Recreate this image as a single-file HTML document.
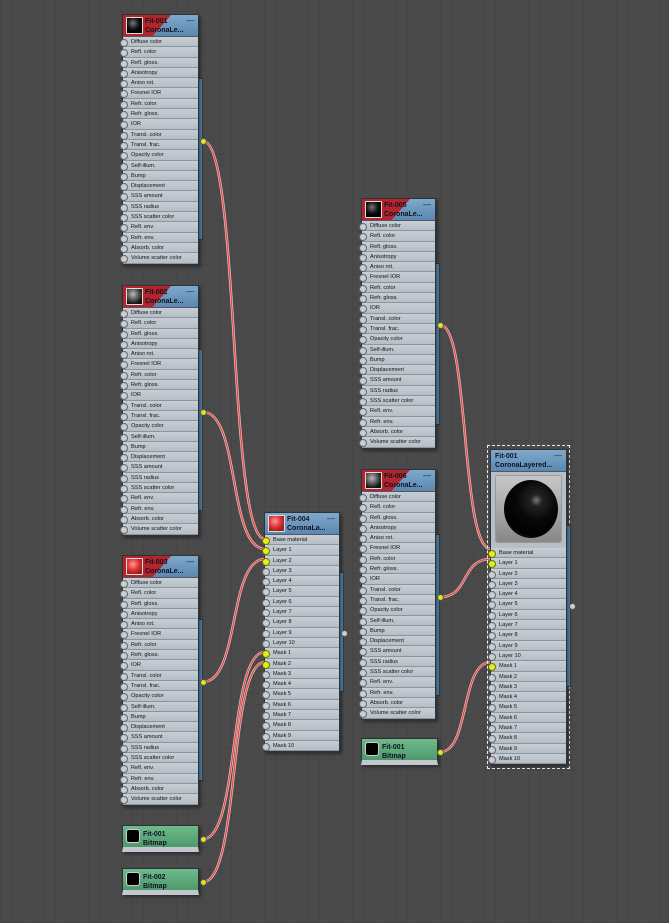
<!DOCTYPE html>
<html><head><meta charset="utf-8"><style>
*{margin:0;padding:0;box-sizing:border-box}
body{width:669px;height:923px;overflow:hidden;background:#4a4a4a;position:relative;font-family:"Liberation Sans",sans-serif;
background-image:linear-gradient(rgba(0,0,0,.06) 1px,transparent 1px),linear-gradient(90deg,rgba(0,0,0,.06) 1px,transparent 1px);background-size:11px 11px}
.node{position:absolute;background:#aeb7bf;border:1px solid #2e3338;box-shadow:2px 2px 3px rgba(0,0,0,.4)}
.hd{height:22px;background:linear-gradient(#7fa9cc,#5b88b0);position:relative;overflow:hidden;border-bottom:1px solid #556}
.hd.m::before{content:"";position:absolute;left:0;top:0;width:48px;height:22px;background:#b3242b;clip-path:polygon(0 0,100% 0,60% 100%,0 100%)}
.ic{position:absolute;left:3px;top:2px;width:17px;height:17px;border:1px solid #ddd;background:radial-gradient(circle at 40% 35%,#777,#111 45%,#000 70%);border-radius:1px}
.ic.red{background:radial-gradient(circle at 40% 35%,#f99,#d33 45%,#922 75%)}
.t{position:absolute;left:22px;top:2px;font-size:7px;font-weight:bold;color:#112;line-height:9px;white-space:nowrap}
.mn{position:absolute;right:4px;top:1px;font-size:8px;color:#223}
.rw{height:10.3px;font-size:5.6px;line-height:10px;padding-left:8px;color:#111;background:linear-gradient(#c7ced5,#b6bec6);border-bottom:1px solid #8c959d;position:relative;white-space:nowrap}
.rw::before{content:"";position:absolute;left:-3px;top:2px;width:6px;height:6px;border-radius:50%;background:#c8ced4;border:1px solid #666}
.rw.y::before{background:#dff01a;border-color:#6a7010}
.bar{position:absolute;width:5px;background:#5a8ab3;border:1px solid #2e3b48}
.out{position:absolute;width:7px;height:7px;border-radius:50%;background:#dde61c;border:1px solid #555}
.out.g{background:#c9cfd5}
.bm{position:absolute;width:77px;height:27px;background:linear-gradient(#6fba8d,#4c9a6c);border:1px solid #2e3338;border-bottom:5px solid #c2c8cd;box-shadow:2px 2px 3px rgba(0,0,0,.4)}
.bm .ic{background:#000;top:3px;width:14px;height:14px;border:1px solid #ccc;border-radius:3px}
.bm .t{left:20px;top:4px}
</style></head><body>
<svg width="669" height="923" style="position:absolute;left:0;top:0" fill="none">
<g stroke="#f3c0c0" stroke-width="2.6">
<path d="M203 141C240 141 228 539 265 539"/><path d="M203 412C240 412 228 549 265 549"/><path d="M203 682C240 682 228 559 265 559"/>
<path d="M203 839C240 839 228 652 265 652"/><path d="M203 882C240 882 228 662 265 662"/>
<path d="M440 325C470 325 460 549 491 549"/><path d="M440 597C470 597 460 559 491 559"/><path d="M440 752C470 752 460 662 491 662"/></g>
<g stroke="#d94a4a" stroke-width="1.2">
<path d="M203 141C240 141 228 539 265 539"/><path d="M203 412C240 412 228 549 265 549"/><path d="M203 682C240 682 228 559 265 559"/>
<path d="M203 839C240 839 228 652 265 652"/><path d="M203 882C240 882 228 662 265 662"/>
<path d="M440 325C470 325 460 549 491 549"/><path d="M440 597C470 597 460 559 491 559"/><path d="M440 752C470 752 460 662 491 662"/></g>
</svg>

<div class="bar" style="left:198px;top:78px;height:162px"></div>
<div class="node" style="left:122px;top:14px;width:77px">
<div class="hd m"><div class="ic"></div><div class="t">Fit-001<br>CoronaLe...</div><div class="mn">—</div></div>
<div class="rw">Diffuse color</div><div class="rw">Refl. color</div><div class="rw">Refl. gloss.</div><div class="rw">Anisotropy</div><div class="rw">Aniso rot.</div><div class="rw">Fresnel IOR</div><div class="rw">Refr. color</div><div class="rw">Refr. gloss.</div><div class="rw">IOR</div><div class="rw">Transl. color</div><div class="rw">Transl. frac.</div><div class="rw">Opacity color</div><div class="rw">Self-illum.</div><div class="rw">Bump</div><div class="rw">Displacement</div><div class="rw">SSS amount</div><div class="rw">SSS radius</div><div class="rw">SSS scatter color</div><div class="rw">Refl. env.</div><div class="rw">Refr. env.</div><div class="rw">Absorb. color</div><div class="rw">Volume scatter color</div>
</div>

<div class="bar" style="left:198px;top:349px;height:162px"></div>
<div class="node" style="left:122px;top:285px;width:77px">
<div class="hd m"><div class="ic" style="background:radial-gradient(circle at 40% 35%,#bbb,#444 50%,#111 75%)"></div><div class="t">Fit-002<br>CoronaLe...</div><div class="mn">—</div></div>
<div class="rw">Diffuse color</div><div class="rw">Refl. color</div><div class="rw">Refl. gloss.</div><div class="rw">Anisotropy</div><div class="rw">Aniso rot.</div><div class="rw">Fresnel IOR</div><div class="rw">Refr. color</div><div class="rw">Refr. gloss.</div><div class="rw">IOR</div><div class="rw">Transl. color</div><div class="rw">Transl. frac.</div><div class="rw">Opacity color</div><div class="rw">Self-illum.</div><div class="rw">Bump</div><div class="rw">Displacement</div><div class="rw">SSS amount</div><div class="rw">SSS radius</div><div class="rw">SSS scatter color</div><div class="rw">Refl. env.</div><div class="rw">Refr. env.</div><div class="rw">Absorb. color</div><div class="rw">Volume scatter color</div>
</div>

<div class="bar" style="left:198px;top:619px;height:162px"></div>
<div class="node" style="left:122px;top:555px;width:77px">
<div class="hd m"><div class="ic red"></div><div class="t">Fit-003<br>CoronaLe...</div><div class="mn">—</div></div>
<div class="rw">Diffuse color</div><div class="rw">Refl. color</div><div class="rw">Refl. gloss.</div><div class="rw">Anisotropy</div><div class="rw">Aniso rot.</div><div class="rw">Fresnel IOR</div><div class="rw">Refr. color</div><div class="rw">Refr. gloss.</div><div class="rw">IOR</div><div class="rw">Transl. color</div><div class="rw">Transl. frac.</div><div class="rw">Opacity color</div><div class="rw">Self-illum.</div><div class="rw">Bump</div><div class="rw">Displacement</div><div class="rw">SSS amount</div><div class="rw">SSS radius</div><div class="rw">SSS scatter color</div><div class="rw">Refl. env.</div><div class="rw">Refr. env.</div><div class="rw">Absorb. color</div><div class="rw">Volume scatter color</div>
</div>

<div class="bar" style="left:435px;top:263px;height:162px"></div>
<div class="node" style="left:361px;top:198px;width:75px">
<div class="hd m"><div class="ic"></div><div class="t">Fit-005<br>CoronaLe...</div><div class="mn">—</div></div>
<div class="rw">Diffuse color</div><div class="rw">Refl. color</div><div class="rw">Refl. gloss.</div><div class="rw">Anisotropy</div><div class="rw">Aniso rot.</div><div class="rw">Fresnel IOR</div><div class="rw">Refr. color</div><div class="rw">Refr. gloss.</div><div class="rw">IOR</div><div class="rw">Transl. color</div><div class="rw">Transl. frac.</div><div class="rw">Opacity color</div><div class="rw">Self-illum.</div><div class="rw">Bump</div><div class="rw">Displacement</div><div class="rw">SSS amount</div><div class="rw">SSS radius</div><div class="rw">SSS scatter color</div><div class="rw">Refl. env.</div><div class="rw">Refr. env.</div><div class="rw">Absorb. color</div><div class="rw">Volume scatter color</div>
</div>

<div class="bar" style="left:435px;top:534px;height:162px"></div>
<div class="node" style="left:361px;top:469px;width:75px">
<div class="hd m"><div class="ic" style="background:radial-gradient(circle at 40% 35%,#bbb,#444 50%,#111 75%)"></div><div class="t">Fit-006<br>CoronaLe...</div><div class="mn">—</div></div>
<div class="rw">Diffuse color</div><div class="rw">Refl. color</div><div class="rw">Refl. gloss.</div><div class="rw">Anisotropy</div><div class="rw">Aniso rot.</div><div class="rw">Fresnel IOR</div><div class="rw">Refr. color</div><div class="rw">Refr. gloss.</div><div class="rw">IOR</div><div class="rw">Transl. color</div><div class="rw">Transl. frac.</div><div class="rw">Opacity color</div><div class="rw">Self-illum.</div><div class="rw">Bump</div><div class="rw">Displacement</div><div class="rw">SSS amount</div><div class="rw">SSS radius</div><div class="rw">SSS scatter color</div><div class="rw">Refl. env.</div><div class="rw">Refr. env.</div><div class="rw">Absorb. color</div><div class="rw">Volume scatter color</div>
</div>

<div class="bar" style="left:339px;top:572px;height:120px"></div>
<div class="node" style="left:264px;top:512px;width:76px">
<div class="hd"><div class="ic red"></div><div class="t">Fit-004<br>CoronaLa...</div><div class="mn">—</div></div>
<div class="rw y">Base material</div><div class="rw y">Layer 1</div><div class="rw y">Layer 2</div><div class="rw">Layer 3</div><div class="rw">Layer 4</div><div class="rw">Layer 5</div><div class="rw">Layer 6</div><div class="rw">Layer 7</div><div class="rw">Layer 8</div><div class="rw">Layer 9</div><div class="rw">Layer 10</div><div class="rw y">Mask 1</div><div class="rw y">Mask 2</div><div class="rw">Mask 3</div><div class="rw">Mask 4</div><div class="rw">Mask 5</div><div class="rw">Mask 6</div><div class="rw">Mask 7</div><div class="rw">Mask 8</div><div class="rw">Mask 9</div><div class="rw">Mask 10</div>
</div>

<div style="position:absolute;left:487px;top:445px;width:83px;height:324px;border:1.5px dashed #eee"></div>
<div class="bar" style="left:566px;top:525px;height:162px"></div>
<div class="node" style="left:490px;top:449px;width:77px">
<div class="hd"><div class="t" style="left:4px">Fit-001<br>CoronaLayered...</div><div class="mn">—</div></div>
<div style="height:76px;background:#b6bec6;padding:3px 4px"><div style="height:68px;background:linear-gradient(#c8c8c8,#888);border:1px solid #999;border-radius:3px;position:relative"><div style="position:absolute;left:8px;top:4px;width:54px;height:58px;border-radius:50%;background:radial-gradient(circle at 60% 35%,#777 0,#222 12%,#080808 40%,#000 70%,#333 100%)"></div></div></div>
<div class="rw y">Base material</div><div class="rw y">Layer 1</div><div class="rw">Layer 2</div><div class="rw">Layer 3</div><div class="rw">Layer 4</div><div class="rw">Layer 5</div><div class="rw">Layer 6</div><div class="rw">Layer 7</div><div class="rw">Layer 8</div><div class="rw">Layer 9</div><div class="rw">Layer 10</div><div class="rw y">Mask 1</div><div class="rw">Mask 2</div><div class="rw">Mask 3</div><div class="rw">Mask 4</div><div class="rw">Mask 5</div><div class="rw">Mask 6</div><div class="rw">Mask 7</div><div class="rw">Mask 8</div><div class="rw">Mask 9</div><div class="rw">Mask 10</div>
</div>

<div class="bm" style="left:122px;top:825px"><div class="ic"></div><div class="t">Fit-001<br>Bitmap</div></div>
<div class="bm" style="left:122px;top:868px"><div class="ic"></div><div class="t">Fit-002<br>Bitmap</div></div>
<div class="bm" style="left:361px;top:738px"><div class="ic"></div><div class="t">Fit-001<br>Bitmap</div></div>

<div class="out" style="left:200px;top:138px"></div>
<div class="out" style="left:200px;top:409px"></div>
<div class="out" style="left:200px;top:679px"></div>
<div class="out" style="left:437px;top:322px"></div>
<div class="out" style="left:437px;top:594px"></div>
<div class="out" style="left:200px;top:836px"></div>
<div class="out" style="left:200px;top:879px"></div>
<div class="out" style="left:437px;top:749px"></div>
<div class="out g" style="left:341px;top:630px"></div>
<div class="out g" style="left:569px;top:603px"></div>
</body></html>
